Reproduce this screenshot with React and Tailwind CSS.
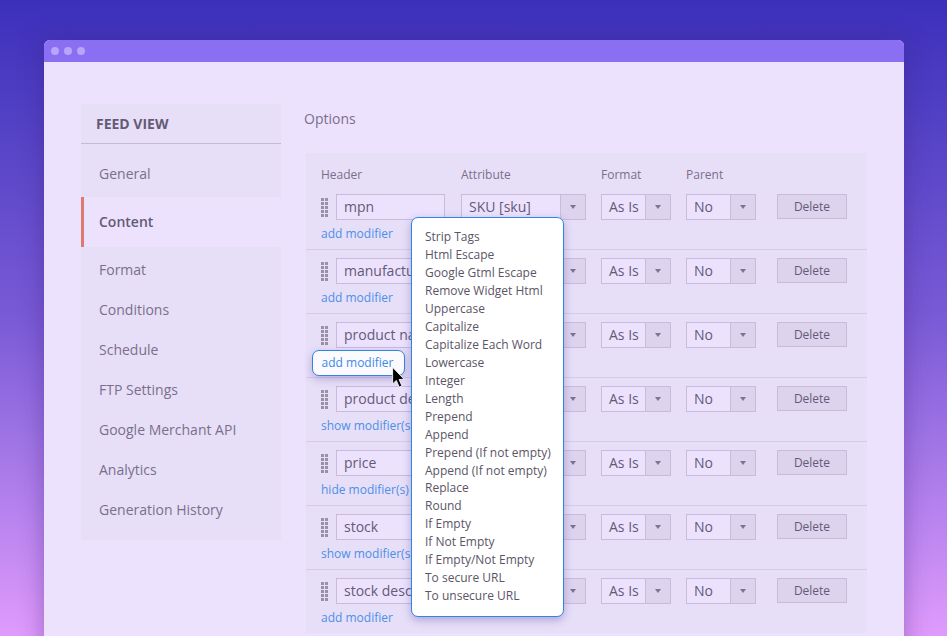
import React from 'react';

const rows = [
  { header: 'mpn', attr: 'SKU [sku]', link: 'add modifier' },
  { header: 'manufacturer', attr: 'Manufacturer', link: 'add modifier' },
  { header: 'product name', attr: 'Product Name', link: 'add modifier', active: true },
  { header: 'product description', attr: 'Description', link: 'show modifier(s)' },
  { header: 'price', attr: 'Price', link: 'hide modifier(s)' },
  { header: 'stock', attr: 'Stock', link: 'show modifier(s)' },
  { header: 'stock description', attr: 'Stock Status', link: 'add modifier' },
];

const nav = ['Format', 'Conditions', 'Schedule', 'FTP Settings', 'Google Merchant API', 'Analytics', 'Generation History'];

const modifiers = [
  'Strip Tags', 'Html Escape', 'Google Gtml Escape', 'Remove Widget Html', 'Uppercase', 'Capitalize',
  'Capitalize Each Word', 'Lowercase', 'Integer', 'Length', 'Prepend', 'Append', 'Prepend (If not empty)',
  'Append (If not empty)', 'Replace', 'Round', 'If Empty', 'If Not Empty', 'If Empty/Not Empty',
  'To secure URL', 'To unsecure URL',
];

function Grip() {
  return (
    <div className="grid grid-cols-[3px_3px] gap-x-[1px] gap-y-[1px] w-[7px] shrink-0 mr-[8px]">
      {Array.from({ length: 10 }).map((_, i) => (
        <span key={i} className="w-[3px] h-[3px] bg-[#9a90a6]" />
      ))}
    </div>
  );
}

function Select({ value, width }) {
  return (
    <div className={`flex h-[26px] border border-[#c8bcd9] bg-[#ece2fe] ${width}`}>
      <div className="flex-1 min-w-0 overflow-hidden whitespace-nowrap pl-[7px] text-[14px] leading-[24px] text-[#655a76]">{value}</div>
      <div className="w-[25px] shrink-0 flex items-center justify-center border-l border-[#c8bcd9] bg-[#ddd3ee]">
        <span className="w-0 h-0 border-x-[3.5px] border-x-transparent border-t-[4px] border-t-[#7d7290]" />
      </div>
    </div>
  );
}

function Row({ row, first }) {
  return (
    <div className={`flex pl-[15px] ${first ? 'h-[55px]' : 'h-[64px] pt-[8px] border-t border-[#d7cbe9]'}`}>
      <div className="w-[140px] shrink-0">
        <div className="flex items-center">
          <Grip />
          <div className="w-[109px] h-[26px] border border-[#c8bcd9] bg-[#ece2fe] pl-[7px] text-[14px] leading-[24px] text-[#655a76] overflow-hidden whitespace-nowrap">{row.header}</div>
        </div>
        <div className="relative mt-[6px] text-[12px] leading-[16px] text-[#4a90e8] whitespace-nowrap">
          {row.link}
          {row.active && (
            <div className="absolute left-[-9px] top-[-4px] w-[93px] h-[26px] rounded-[7px] border border-[#2f86e0] bg-[#fafaff] shadow-[0_3px_8px_rgba(70,50,150,0.3)] pr-[2px] text-center text-[12px] leading-[24px] text-[#3f8ae6]">
              add modifier
            </div>
          )}
        </div>
      </div>
      <div className="w-[140px] shrink-0"><Select value={row.attr} width="w-[125px]" /></div>
      <div className="w-[85px] shrink-0"><Select value="As Is" width="w-[70px]" /></div>
      <div className="w-[91px] shrink-0"><Select value="No" width="w-[70px]" /></div>
      <div className="w-[70px] h-[25px] shrink-0 border border-[#c8bcd9] bg-[#ddd3ee] text-center text-[12px] leading-[23px] text-[#655a76]">Delete</div>
    </div>
  );
}

export default function App() {
  return (
    <div className="h-[636px] overflow-hidden pt-[40px] px-[43px] pr-[43px] bg-gradient-to-b from-[#3c2fba] via-[#7a5ad6] to-[#e09bfc] font-['Open_Sans',sans-serif]">
      <div className="w-[860px] ml-[1px] h-[700px] rounded-t-[6px] overflow-hidden bg-[#ece2fe] shadow-[0_0_24px_rgba(60,30,120,0.4)]">
        <div className="h-[22px] bg-[#8a6ff2] flex items-center gap-[5px] pl-[7px]">
          <span className="w-[8px] h-[8px] rounded-full bg-[#b8a5f8]" />
          <span className="w-[8px] h-[8px] rounded-full bg-[#b8a5f8]" />
          <span className="w-[8px] h-[8px] rounded-full bg-[#b8a5f8]" />
        </div>

        <div className="flex pl-[37px] pt-[42px]">
          <aside className="w-[200px] h-[436px] shrink-0 bg-[#e7dff8]">
            <div className="h-[40px] border-b border-[#c6bad8] pl-[15px] text-[14px] leading-[39px] font-bold text-[#655a76]">FEED VIEW</div>
            <div className="h-[53px] pl-[18px] pt-[5px] text-[14px] leading-[49px] text-[#7a6f8b]">General</div>
            <div className="h-[50px] bg-[#ece2fe] border-l-[3px] border-[#dc7a72] pl-[15px] text-[14px] leading-[50px] font-semibold text-[#655a76]">Content</div>
            <div className="pt-[3px]">
              {nav.map((n) => (
                <div key={n} className="h-[40px] pl-[18px] text-[14px] leading-[40px] text-[#7a6f8b]">{n}</div>
              ))}
            </div>
          </aside>

          <main className="relative ml-[25px] flex-1">
            <div className="text-[14px] leading-[20px] text-[#7a6f8b] pt-[5px] ml-[-2px]">Options</div>
            <div className="mt-[24px] w-[561px] bg-[#e7dff8]">
              <div className="flex pl-[15px] pt-[14px] h-[41px] text-[12px] leading-[16px] text-[#7a6f8b]">
                <div className="w-[140px]">Header</div>
                <div className="w-[140px]">Attribute</div>
                <div className="w-[85px]">Format</div>
                <div>Parent</div>
              </div>
              {rows.map((row, i) => (
                <Row key={row.header} row={row} first={i === 0} />
              ))}
            </div>

            <div className="absolute left-[105px] top-[113px] w-[153px] h-[400px] rounded-[7px] border border-[#2f86e0] bg-white shadow-[0_3px_8px_rgba(70,50,150,0.35)] pl-[13px] pt-[10px] text-[12px] leading-[18px] text-[#5b5566] whitespace-nowrap">
              {modifiers.map((m) => (
                <div key={m} className={m === 'Replace' ? 'mt-[-1px]' : ''}>{m}</div>
              ))}
            </div>

            <svg className="absolute left-[85px] top-[262px]" width="15" height="24" viewBox="0 0 14 22">
              <path d="M1.5 1 L1.5 16.5 L5 13.3 L7.6 19.5 L10.2 18.4 L7.6 12.4 L12.2 12.2 Z" fill="#000" stroke="#fff" strokeWidth="0.8" />
            </svg>
          </main>
        </div>
      </div>
    </div>
  );
}
